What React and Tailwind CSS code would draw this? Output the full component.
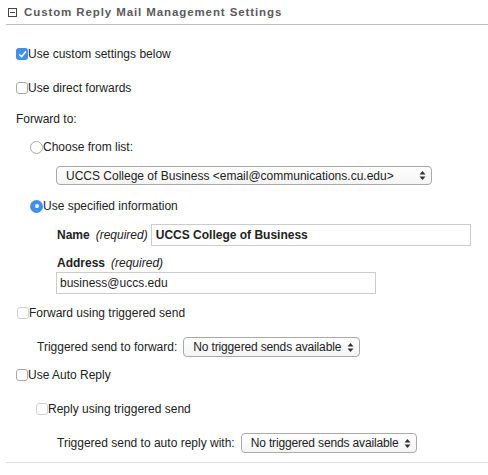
import React from "react";

function Check({ checked, faint }) {
  if (checked) {
    return (
      <span className="inline-flex w-[12px] h-[12px] rounded-[3px] bg-[#3b8ff6] items-center justify-center shrink-0">
        <svg width="9" height="9" viewBox="0 0 9 9">
          <path d="M1.6 4.8 L3.6 6.8 L7.6 1.8" stroke="white" strokeWidth="1.6" fill="none" strokeLinecap="round" strokeLinejoin="round" />
        </svg>
      </span>
    );
  }
  return (
    <span
      className={
        "inline-block w-[12px] h-[12px] rounded-[3px] bg-white border shrink-0 " +
        (faint ? "border-[#d0d0d0]" : "border-[#a8a8a8]")
      }
    />
  );
}

function Radio({ checked }) {
  if (checked) {
    return (
      <span className="inline-flex w-[13px] h-[13px] rounded-full bg-[#3b8ff6] items-center justify-center shrink-0">
        <span className="w-[4px] h-[4px] rounded-full bg-white" />
      </span>
    );
  }
  return <span className="inline-block w-[13px] h-[13px] rounded-full bg-white border border-[#a8a8a8] shrink-0" />;
}

function Arrows() {
  return (
    <svg width="7" height="11" viewBox="0 0 7 11" className="shrink-0">
      <path d="M3.5 1 L6.5 4.5 L0.5 4.5 Z" fill="#333" />
      <path d="M3.5 10 L6.5 6.5 L0.5 6.5 Z" fill="#333" />
    </svg>
  );
}

function Select({ text, className, textClass }) {
  return (
    <div
      className={
        "flex items-center justify-between rounded-[4px] border border-[#a9a9a9] bg-gradient-to-b from-white to-[#f4f4f4] pr-[5px] " +
        className
      }
    >
      <span className={"whitespace-nowrap " + (textClass || "")}>{text}</span>
      <Arrows />
    </div>
  );
}

export default function App() {
  return (
    <div
      className="w-[488px] h-[475px] bg-white text-[12px] text-[#222] leading-[16px] overflow-hidden"
      style={{ fontFamily: '"Liberation Sans", Arial, Helvetica, sans-serif' }}
    >
      <div className="ml-[6px] h-[25px] border-b border-[#bdbdbd] flex items-center">
        <span className="ml-[2px] mt-[1px] w-[9px] h-[9px] border border-[#444] flex items-center justify-center bg-white">
          <span className="w-[5px] h-[1px] bg-[#444]" />
        </span>
        <span className="ml-[7px] text-[11.5px] font-bold tracking-[0.9px] text-[#5a5a5a]">
          Custom Reply Mail Management Settings
        </span>
      </div>

      <div className="pl-[16px] flex flex-col">
        <div className="mt-[21px] h-[16px] flex items-center">
          <Check checked />
          <span>Use custom settings below</span>
        </div>
        <div className="mt-[18px] h-[16px] flex items-center">
          <Check />
          <span>Use direct forwards</span>
        </div>
        <div className="mt-[15px] h-[16px] flex items-center">
          <span>Forward to:</span>
        </div>
        <div className="mt-[12px] h-[16px] flex items-center pl-[14px]">
          <Radio />
          <span>Choose from list:</span>
        </div>
        <div className="mt-[11px] pl-[40px] flex">
          <Select
            className="w-[376px] h-[19px] pl-[9px]"
            text="UCCS College of Business <email@communications.cu.edu>"
          />
        </div>
        <div className="mt-[13px] h-[16px] flex items-center pl-[14px]">
          <Radio checked />
          <span>Use specified information</span>
        </div>
        <div className="mt-[10px] pl-[41px] flex items-center h-[22px]">
          <span className="font-bold">Name</span>
          <span className="italic ml-[6px] mr-[3px]">(required)</span>
          <div className="w-[320px] h-[22px] border border-[#cccccc] flex items-center pl-[4px] font-bold">
            UCCS College of Business
          </div>
        </div>
        <div className="mt-[9px] pl-[41px] h-[16px] flex items-center">
          <span className="font-bold">Address</span>
          <span className="italic ml-[6px]">(required)</span>
        </div>
        <div className="mt-[1px] pl-[40px] flex">
          <div className="w-[320px] h-[22px] border border-[#cccccc] flex items-center pl-[3px]">
            business@uccs.edu
          </div>
        </div>
        <div className="mt-[11px] h-[16px] flex items-center pl-[1px]">
          <Check faint />
          <span>Forward using triggered send</span>
        </div>
        <div className="mt-[16px] h-[20px] flex items-center pl-[21px]">
          <span>Triggered send to forward:</span>
          <Select
            className="ml-[6px] w-[177px] h-[20px] pl-[9px]"
            textClass="tracking-[-0.15px]"
            text="No triggered sends available"
          />
        </div>
        <div className="mt-[10px] h-[16px] flex items-center">
          <Check />
          <span>Use Auto Reply</span>
        </div>
        <div className="mt-[18px] h-[16px] flex items-center pl-[20px]">
          <Check faint />
          <span>Reply using triggered send</span>
        </div>
        <div className="mt-[16px] h-[20px] flex items-center pl-[41px]">
          <span>Triggered send to auto reply with:</span>
          <Select
            className="ml-[6px] w-[176px] h-[20px] pl-[9px]"
            textClass="tracking-[-0.15px]"
            text="No triggered sends available"
          />
        </div>
      </div>
      <div className="ml-[6px] mt-[9px] border-b border-[#e0e0e0]" />
    </div>
  );
}
